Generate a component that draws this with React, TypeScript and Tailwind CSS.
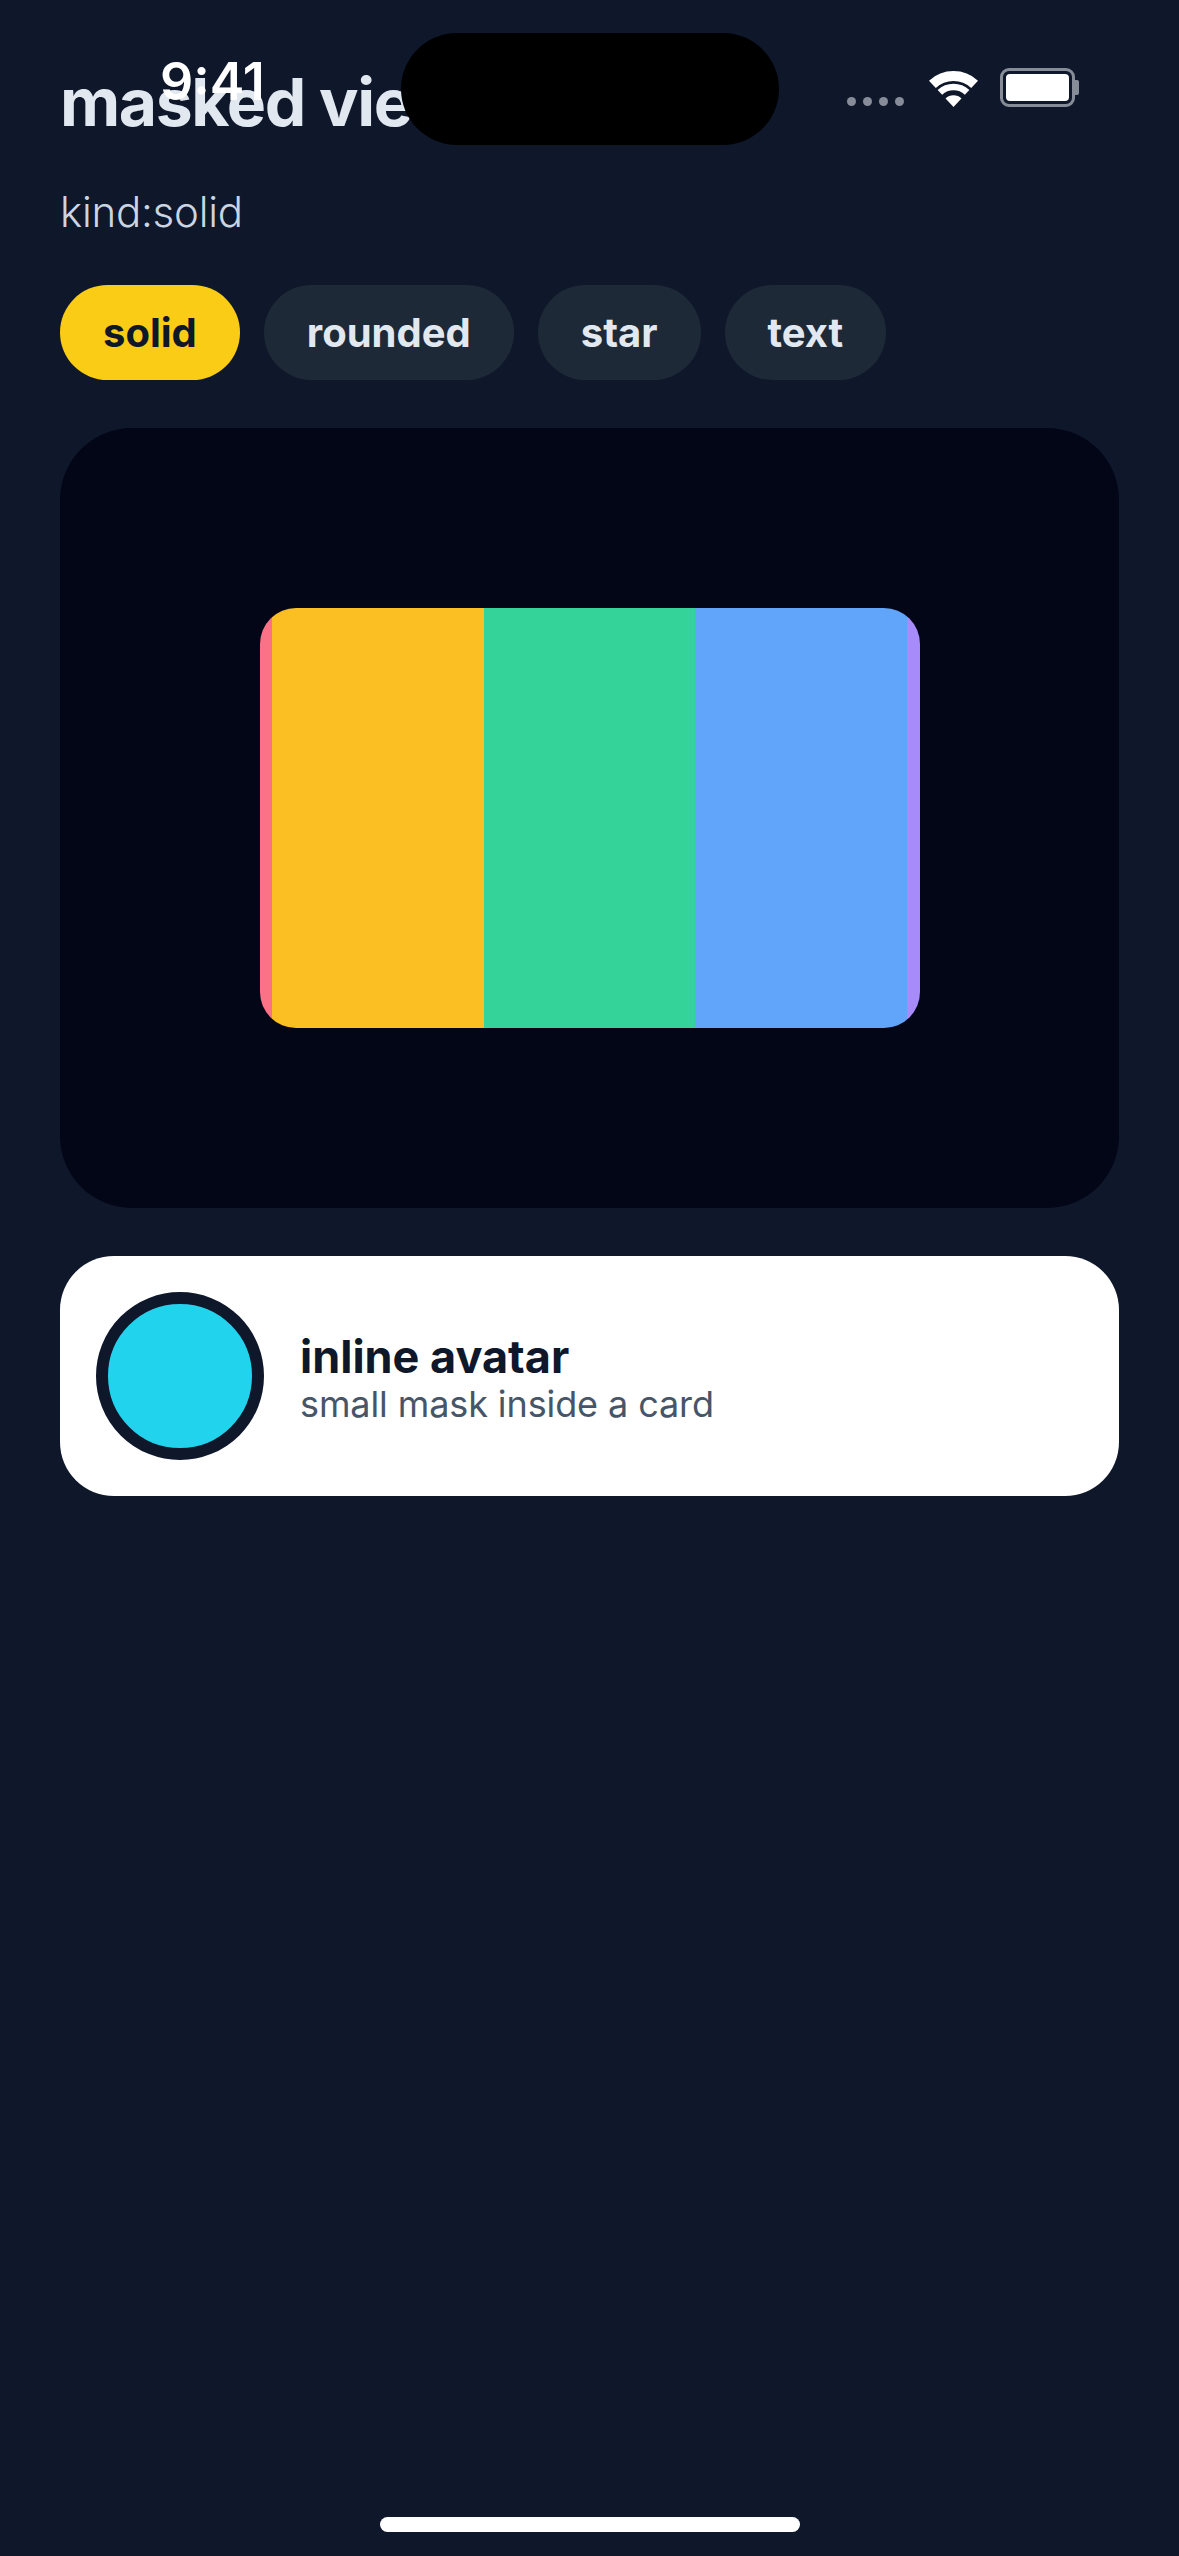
const tabs = ['solid', 'rounded', 'star', 'text']

const strips = ['bg-[#fb7185]', 'bg-[#fbbf24]', 'bg-[#34d399]', 'bg-[#60a5fa]', 'bg-[#a78bfa]']

function StatusBar() {
  return (
    <>
      <span className="absolute left-[160px] top-[50px] text-[52px] leading-[64px] font-semibold text-white">9:41</span>
      <div className="absolute left-[401px] top-[33px] h-[112px] w-[378px] rounded-full bg-black" />
      <div className="absolute left-[847px] top-[97px] flex gap-[7px]">
        {[0, 1, 2, 3].map((i) => (
          <span key={i} className="h-[9px] w-[9px] rounded-full bg-[#878d98]" />
        ))}
      </div>
      <svg className="absolute left-[929px] top-[71px]" width="49" height="36" viewBox="0 0 49 36" fill="none">
        <path d="M3.4 13.3A31 31 0 0 1 45.6 13.3" stroke="#fff" strokeWidth="10" />
        <path d="M10.9 21.4A20 20 0 0 1 38.1 21.4" stroke="#fff" strokeWidth="6.6" />
        <path d="M24.5 36L16.5 27.4A11.7 11.7 0 0 1 32.5 27.4Z" fill="#fff" />
      </svg>
      <div className="absolute left-[1000px] top-[68px] flex items-center">
        <div className="h-[39px] w-[75px] rounded-[9px] border-[3px] border-[#878d98] p-[3px]">
          <div className="h-full w-full rounded-[4px] bg-white" />
        </div>
        <div className="h-[15px] w-[4px] rounded-r-[2px] bg-[#878d98]" />
      </div>
    </>
  )
}

export default function App() {
  return (
    <div className="relative h-[2556px] w-[1179px] overflow-hidden bg-[#0f172a] px-[60px] pt-[60px] font-[Inter,sans-serif]">
      <h1 className="text-[66px] leading-[84px] font-bold tracking-[-1.4px] text-[#e2e8f0]">masked view</h1>
      <p className="mt-[42px] text-[42px] leading-[52px] font-light tracking-[-0.25px] text-[#cbd5e1]">kind:solid</p>

      <div className="mt-[47px] flex gap-[24px]">
        {tabs.map((t, i) => (
          <div
            key={t}
            className={
              i === 0
                ? 'flex h-[95px] items-center rounded-full bg-[#facc15] px-[43px] text-[40px] font-bold text-[#0f172a]'
                : 'flex h-[95px] items-center rounded-full bg-[#1e2937] px-[43px] text-[40px] font-bold text-[#e2e8f0]'
            }
          >
            {t}
          </div>
        ))}
      </div>

      <div className="mt-[48px] flex h-[780px] items-center justify-center rounded-[72px] bg-[#020617]">
        <div className="flex h-[420px] w-[660px] justify-center overflow-hidden rounded-[36px]">
          {strips.map((c) => (
            <div key={c} className={`h-full w-[211.5px] shrink-0 ${c}`} />
          ))}
        </div>
      </div>

      <div className="mt-[48px] flex h-[240px] items-center gap-[36px] rounded-[54px] bg-white px-[36px]">
        <div className="h-[168px] w-[168px] rounded-full border-[12px] border-[#0f172a] bg-[#22d3ee]" />
        <div className="pt-[6px]">
          <div className="text-[45px] leading-[50px] font-bold text-[#0f172a]">inline avatar</div>
          <div className="text-[36px] leading-[44px] tracking-[-0.1px] text-[#475569]">small mask inside a card</div>
        </div>
      </div>

      <StatusBar />
      <div className="absolute bottom-[24px] left-[380px] h-[15px] w-[420px] rounded-full bg-white" />
    </div>
  )
}
